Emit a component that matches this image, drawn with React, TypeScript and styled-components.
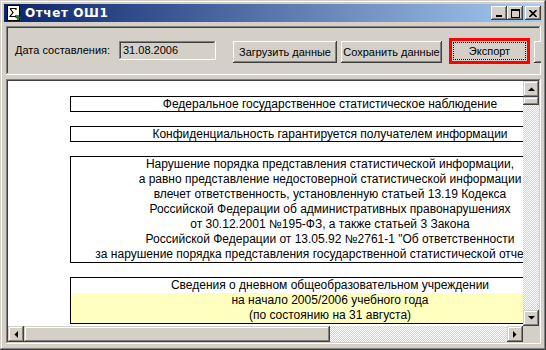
import React from "react";
import styled, { createGlobalStyle } from "styled-components";

const FACE = "#d4d0c8";

const GlobalStyle = createGlobalStyle`
  html, body {
    margin: 0;
    padding: 0;
    background: ${FACE};
  }
  body {
    font-family: "Liberation Sans", Arial, sans-serif;
  }
`;

// classic 3D edges
const raisedEdge = `
  box-shadow: inset -1px -1px #404040, inset 1px 1px #ffffff,
    inset -2px -2px #808080, inset 2px 2px ${FACE};
`;

const frameEdge = `
  box-shadow: inset -1px -1px #404040, inset 1px 1px ${FACE},
    inset -2px -2px #808080, inset 2px 2px #ffffff;
`;

const sunkenEdge = `
  box-shadow: inset -1px -1px #ffffff, inset 1px 1px #808080,
    inset -2px -2px ${FACE}, inset 2px 2px #404040;
`;

const Window = styled.div`
  width: 546px;
  height: 350px;
  box-sizing: border-box;
  padding: 4px;
  background: ${FACE};
  ${frameEdge}
  display: flex;
  flex-direction: column;
  overflow: hidden;
`;

const TitleBar = styled.div`
  height: 18px;
  flex-shrink: 0;
  display: flex;
  align-items: center;
  padding: 0 1px 0 2px;
  background: linear-gradient(to right, #0a246a, #a6caf0);
`;

const Title = styled.span`
  margin-left: 3px;
  flex: 1;
  color: #fff;
  font-family: "DejaVu Sans", Verdana, sans-serif;
  font-weight: bold;
  font-size: 12px;
  letter-spacing: 0.6px;
  white-space: nowrap;
`;

const CaptionButton = styled.button<{ $gap?: boolean }>`
  width: 16px;
  height: 14px;
  padding: 0;
  border: none;
  margin-left: ${(p) => (p.$gap ? "2px" : "0")};
  background: ${FACE};
  ${raisedEdge}
  display: flex;
  align-items: center;
  justify-content: center;
`;

const Client = styled.div`
  flex: 1;
  display: flex;
  flex-direction: column;
  gap: 4px;
  padding: 4px 1px 2px 2px;
  min-height: 0;
`;

const Toolbar = styled.div`
  height: 49px;
  flex-shrink: 0;
  box-sizing: border-box;
  padding: 2px 2px 2px 9px;
  ${sunkenEdge}
  display: flex;
  align-items: flex-start;
  overflow: hidden;
`;

const Label = styled.span`
  margin-top: 13px;
  line-height: 19px;
  font-size: 11px;
  color: #000;
  white-space: nowrap;
  width: 104px;
  flex-shrink: 0;
`;

const DateField = styled.div`
  margin-top: 13px;
  width: 97px;
  height: 19px;
  flex-shrink: 0;
  box-sizing: border-box;
  padding: 0 4px;
  ${sunkenEdge}
  background: ${FACE};
  font-size: 11px;
  line-height: 19px;
  color: #000;
`;

const Button = styled.button<{ $w: number; $ml?: number }>`
  margin-top: 13px;
  margin-left: ${(p) => p.$ml ?? 4}px;
  width: ${(p) => p.$w}px;
  height: 22px;
  flex-shrink: 0;
  padding: 0;
  border: none;
  background: ${FACE};
  ${raisedEdge}
  font-family: "Liberation Sans", Arial, sans-serif;
  font-size: 11px;
  color: #000;
  white-space: nowrap;
`;

const ExportButton = styled.button`
  margin-top: 10px;
  margin-left: 7px;
  width: 81px;
  height: 26px;
  flex-shrink: 0;
  padding: 1px;
  box-sizing: border-box;
  border: 3px solid #ff0000;
  background: ${FACE};
  display: flex;
  font-family: "Liberation Sans", Arial, sans-serif;
  font-size: 11px;
  color: #000;
`;

const FocusRect = styled.span`
  flex: 1;
  border: 1px dotted #000;
  display: flex;
  align-items: center;
  justify-content: center;
`;

const Grid = styled.div`
  height: 265px;
  flex-shrink: 0;
  box-sizing: border-box;
  padding: 2px;
  ${sunkenEdge}
  display: grid;
  grid-template-columns: 1fr 16px;
  grid-template-rows: 1fr 16px;
`;

const Sheet = styled.div`
  background: #fff;
  overflow: hidden;
  padding: 15px 0 0 62px;
  display: flex;
  flex-direction: column;
  align-items: flex-start;
  gap: 14px;
  min-width: 0;
  min-height: 0;
`;

const Cell = styled.div<{ $line?: number }>`
  width: 520px;
  flex-shrink: 0;
  box-sizing: border-box;
  border: 1px solid #000;
  font-size: 12px;
  line-height: ${(p) => p.$line ?? 14}px;
  color: #000;
  text-align: center;
  white-space: nowrap;
`;

const Row = styled.div<{ $tint?: boolean }>`
  background: ${(p) => (p.$tint ? "#ffffc0" : "#fff")};
`;

const VScroll = styled.div`
  display: flex;
  flex-direction: column;
  min-height: 0;
`;

const HScroll = styled.div`
  display: flex;
  min-width: 0;
`;

const Track = styled.div`
  flex: 1;
  background: repeating-conic-gradient(${FACE} 0 25%, #ffffff 0 50%) 0 0 / 2px 2px;
`;

const ArrowButton = styled.div`
  width: 16px;
  height: 16px;
  flex-shrink: 0;
  box-sizing: border-box;
  background: ${FACE};
  ${frameEdge}
  display: flex;
  align-items: center;
  justify-content: center;
`;

const Thumb = styled.div<{ $len: number; $vertical?: boolean }>`
  flex-shrink: 0;
  width: ${(p) => (p.$vertical ? 16 : p.$len)}px;
  height: ${(p) => (p.$vertical ? p.$len : 16)}px;
  background: ${FACE};
  ${frameEdge}
`;

const Corner = styled.div`
  background: ${FACE};
`;

const Arrow = ({ dir }: { dir: "up" | "down" | "left" | "right" }) => {
  const pts = {
    up: "0,4 7,4 3.5,0.5",
    down: "0,0 7,0 3.5,3.5",
    left: "4,0 4,7 0.5,3.5",
    right: "0,0 0,7 3.5,3.5",
  }[dir];
  const vertical = dir === "up" || dir === "down";
  return (
    <svg width={vertical ? 7 : 4} height={vertical ? 4 : 7} viewBox={vertical ? "0 0 7 4" : "0 0 4 7"}>
      <polygon points={pts} fill="#000" />
    </svg>
  );
};

const ReportIcon = () => (
  <svg width="16" height="16" viewBox="0 0 16 16">
    <rect x="1.5" y="0.5" width="12" height="15" fill="#fffff0" stroke="#000" />
    <path d="M4 3.5 H10 V5 M4 3.5 L7 7.5 L4 11.5 H10 V10" fill="none" stroke="#000" strokeWidth="1.2" />
    <path d="M12 10 V15 M9.5 12.5 H14.5" stroke="#008000" strokeWidth="1.6" />
  </svg>
);

const MinGlyph = () => (
  <svg width="8" height="7" viewBox="0 0 8 7">
    <rect x="1" y="5" width="6" height="2" fill="#000" />
  </svg>
);

const MaxGlyph = () => (
  <svg width="9" height="9" viewBox="0 0 9 9">
    <rect x="0.5" y="0.5" width="8" height="8" fill="none" stroke="#000" />
    <rect x="0" y="0" width="9" height="2" fill="#000" />
  </svg>
);

const CloseGlyph = () => (
  <svg width="8" height="7" viewBox="0 0 8 7">
    <path d="M0.5 0 L7.5 7 M7.5 0 L0.5 7" stroke="#000" strokeWidth="1.6" />
  </svg>
);

const warning = [
  "Нарушение порядка представления статистической информации,",
  "а равно представление недостоверной статистической информации",
  "влечет ответственность, установленную статьей 13.19 Кодекса",
  "Российской Федерации об административных правонарушениях",
  "от 30.12.2001 №195-ФЗ, а также статьей 3 Закона",
  "Российской Федерации от 13.05.92 №2761-1 \"Об ответственности",
  "за нарушение порядка представления государственной статистической отчетности\"",
];

function App() {
  return (
    <>
      <GlobalStyle />
      <Window>
        <TitleBar>
          <ReportIcon />
          <Title>Отчет ОШ1</Title>
          <CaptionButton>
            <MinGlyph />
          </CaptionButton>
          <CaptionButton>
            <MaxGlyph />
          </CaptionButton>
          <CaptionButton $gap>
            <CloseGlyph />
          </CaptionButton>
        </TitleBar>
        <Client>
          <Toolbar>
            <Label>Дата составления:</Label>
            <DateField>31.08.2006</DateField>
            <Button $w={104} $ml={17}>Загрузить данные</Button>
            <Button $w={101}>Сохранить данные</Button>
            <ExportButton>
              <FocusRect>Экспорт</FocusRect>
            </ExportButton>
            <Button $w={80} aria-label="more" />
          </Toolbar>
          <Grid>
            <Sheet>
              <Cell>Федеральное государственное статистическое наблюдение</Cell>
              <Cell>Конфиденциальность гарантируется получателем информации</Cell>
              <Cell $line={15}>
                {warning.map((line) => (
                  <Row key={line}>{line}</Row>
                ))}
              </Cell>
              <Cell $line={15}>
                <Row>Сведения о дневном общеобразовательном учреждении</Row>
                <Row $tint>на начало 2005/2006 учебного года</Row>
                <Row $tint>(по состоянию на 31 августа)</Row>
              </Cell>
            </Sheet>
            <VScroll>
              <ArrowButton>
                <Arrow dir="up" />
              </ArrowButton>
              <Thumb $vertical $len={8} />
              <Track />
              <ArrowButton>
                <Arrow dir="down" />
              </ArrowButton>
            </VScroll>
            <HScroll>
              <ArrowButton>
                <Arrow dir="left" />
              </ArrowButton>
              <Thumb $len={306} />
              <Track />
              <ArrowButton>
                <Arrow dir="right" />
              </ArrowButton>
            </HScroll>
            <Corner />
          </Grid>
        </Client>
      </Window>
    </>
  );
}

export default App;
